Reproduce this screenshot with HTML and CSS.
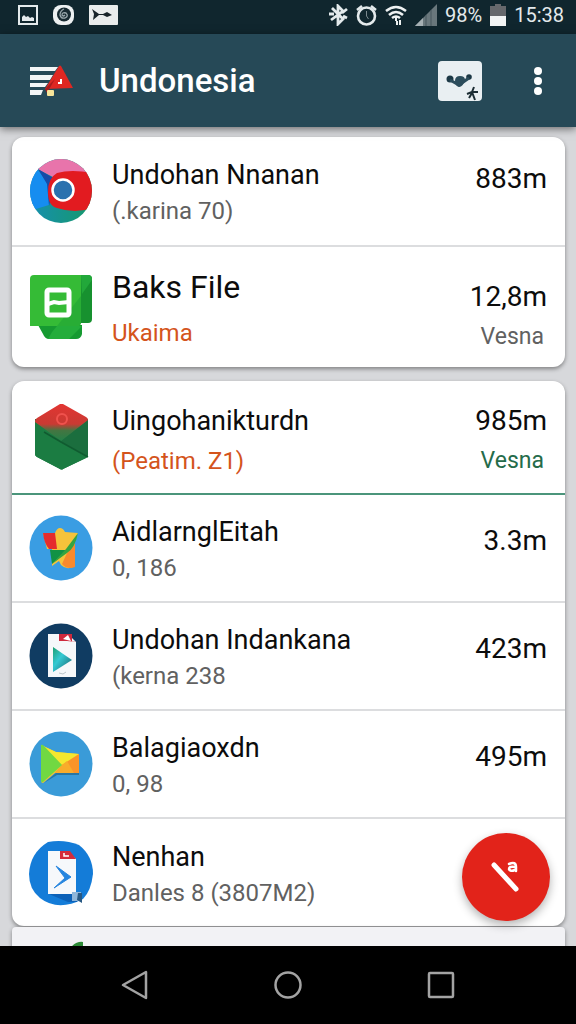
FILE: index.html
```
<!DOCTYPE html>
<html lang="id">
<head>
    <meta charset="UTF-8">
    <meta name="viewport" content="width=device-width, initial-scale=1.0">
    <title>Undonesia</title>
    <link rel="stylesheet" href="styles.css">
</head>
<body>
    <div class="status-bar">
        <div class="status-left">
            <svg width="20" height="20" viewBox="0 0 20 20"><rect x="1" y="1" width="18" height="18" fill="none" stroke="#e4eaec" stroke-width="2"/><path d="M4 16V12l2-2 2 2 2-1 2 2 2-1 2 1v3z" fill="#e4eaec"/></svg>
            <svg width="21" height="20" viewBox="0 0 21 20"><rect width="21" height="20" rx="8" fill="#eef1f2"/><circle cx="11" cy="9.500" r="7" fill="#182a31"/><path d="M11 4q-4 2-4 6 1 4 5 3 4-2 1-5-4-1-4 2 1 2 3 0" fill="none" stroke="#9aa8ad" stroke-width="1.300"/></svg>
            <svg width="29" height="20" viewBox="0 0 29 20"><rect width="29" height="20" rx="1" fill="#e9ecec"/><path d="M3 4l7 5h4l4-2 5 3-5 2-4-2h-4l-6 5 1-6z" fill="#172329"/></svg>
        </div>
        <div class="status-right">
            <svg width="20" height="22" viewBox="0 0 20 22" fill="none" stroke="#e4eaec" stroke-width="2.800"><path d="M4 4l11 11-5 5V2l5 5L3 16M1 10h5M14 9l5-4M15 12l4 2"/></svg>
            <svg width="21" height="22" viewBox="0 0 21 22" fill="none" stroke="#e4eaec"><circle cx="10.500" cy="12" r="8.500" stroke-width="2.600"/><path d="M1 6l5-4M20 6l-5-4" stroke-width="2.500"/><path d="M10.500 7v5l2 3" stroke-width="1" opacity=".5"/></svg>
            <svg width="22" height="22" viewBox="0 0 22 22" fill="none" stroke="#eef1f2" stroke-width="2.500"><path d="M1 7q10-8 20 0M4 11q7-6 14 0M7 14q4-3 8 0"/><path d="M11 13v4M12 17v4M15 16v5" stroke-width="2"/></svg>
            <svg width="22" height="22" viewBox="0 0 22 22"><path d="M0 22L22 0v22z" fill="#69777c"/><path d="M0 22l8-8v8z" fill="#a6b0b4"/><path d="M11 11v11M16 6v16" stroke="#46565c"/></svg>
            <span class="battery-text">98%</span>
            <svg width="16" height="22" viewBox="0 0 16 22"><path d="M5 0h6v2h5v10H0V2h5z" fill="#66686c"/><path d="M0 12h16v10H0z" fill="#f2f4f4"/></svg>
            <span class="clock">15:38</span>
        </div>
    </div>

    <header class="app-bar">
        <button class="icon-button" type="button" aria-label="Menu">
            <svg width="44" height="32" viewBox="0 0 44 32">
                <path d="M1 2h28l-3 4H1zM1 10h23l-3 5H1zM1 18h18l-3 4H1zM1 25h13l-2 5H1z" fill="#f3f6f7"/>
                <path d="M30 1q1-1 2 0l12 22-28 1z" fill="#df2722"/>
                <path d="M16 24l10-10-8 14z" fill="#a81c1d"/>
                <path d="M32 14v4h-3" fill="none" stroke="#fff" stroke-width="2"/>
                <rect x="18" y="25" width="7" height="6" rx="1" fill="#f7e59a"/>
            </svg>
        </button>
        <h1>Undonesia</h1>
        <button class="icon-button" type="button" aria-label="Akun">
            <svg width="44" height="40" viewBox="0 0 44 40">
                <rect width="44" height="40" rx="4" fill="#e9eff2"/>
                <circle cx="12" cy="18" r="3.500" fill="#1c3845"/><circle cx="31" cy="16" r="2.800" fill="#1c3845"/>
                <path d="M12 19l9 5 10-7" fill="none" stroke="#2c4d5c" stroke-width="3"/>
                <path d="M17 20q0-5 5-5 5 0 5 4-2 7-6 7-4-1-4-6z" fill="#2c4d5c"/>
                <path d="M36 26l-2 5-5 2M34 31l6 0M34 31l3 8M34 32l-3 5" fill="none" stroke="#1c2d34" stroke-width="2"/>
            </svg>
        </button>
        <button class="icon-button more" type="button" aria-label="Opsi lainnya">
            <svg width="8" height="28" viewBox="0 0 8 28" fill="#fff"><circle cx="4" cy="4" r="4"/><circle cx="4" cy="14" r="4"/><circle cx="4" cy="24" r="4"/></svg>
        </button>
    </header>

    <main>
        <div class="scroll">
            <ul class="card">
                <li class="row first">
                    <svg class="app-icon" viewBox="0 0 64 66">
                        <defs>
                            <clipPath id="round"><ellipse cx="32" cy="33" rx="31" ry="32"/></clipPath>
                            <linearGradient id="teal" x1="0" x2="1"><stop offset="0" stop-color="#168fb0"/><stop offset="1" stop-color="#16996a"/></linearGradient>
                        </defs>
                        <g clip-path="url(#round)">
                            <path d="M0 0h64v66H0z" fill="url(#teal)"/>
                            <path d="M0 0h64v16L26 20 10 12z" fill="#e874ab"/>
                            <path d="M0 0l9 12 12 16-1 19-20 6z" fill="#168df0"/>
                            <path d="M9 11l17 10-6 27-2-22z" fill="#174ba8"/>
                            <path d="M28 15q14-4 36 0v35q-18 6-36 0-9-2-9-16 0-14 9-19z" fill="#e21b20"/>
                        </g>
                        <circle cx="34" cy="32" r="10.500" fill="#2a71ae" stroke="#fff" stroke-width="2.500"/>
                    </svg>
                    <div class="info"><h2>Undohan Nnanan</h2><p>(.karina 70)</p></div>
                    <div class="size"><span>883m</span></div>
                </li>
                <li class="row featured">
                    <svg class="app-icon" viewBox="0 0 64 66">
                        <path d="M50 1h9q4 0 4 4v40q0 4-4 4h-9z" fill="#17912f"/>
                        <path d="M53 20l10-14V5q0-4-4-4h-7z" fill="#22a83a"/>
                        <path d="M9 51h44v9q-1 5-6 5H20q-4 0-6-5z" fill="#169a31"/>
                        <path d="M28 52h25L40 65H19q4-8 9-13z" fill="#24ad3b"/>
                        <path d="M5 1h47v47q0 4-4 4H1V5q0-4 4-4z" fill="#35bb36"/>
                        <path d="M52 22v26q0 4-4 4H28z" fill="#28ad35"/>
                        <rect x="18" y="16" width="22" height="25" rx="2" fill="none" stroke="#fff" stroke-width="5"/>
                        <path d="M19 30l6-2 5 1 10-1" fill="none" stroke="#fff" stroke-width="4"/>
                    </svg>
                    <div class="info"><h2>Baks File</h2><p class="warn">Ukaima</p></div>
                    <div class="size"><span>12,8m</span><small>Vesna</small></div>
                </li>
            </ul>

            <ul class="card">
                <li class="row update">
                    <svg class="app-icon" viewBox="0 0 64 66">
                        <defs><linearGradient id="fold" x1="0" y1="0" x2="0" y2="1"><stop offset="0" stop-color="#e33532"/><stop offset=".55" stop-color="#c93a33"/><stop offset=".72" stop-color="#447541"/><stop offset="1" stop-color="#238048"/></linearGradient></defs>
                        <path d="M6 15h53v36q0 2-2 3L34 65q-1 1-3 0L8 53q-2-1-2-3z" fill="#187a40"/>
                        <path d="M6 15l25 22 28 15-2 2-23 11q-1 1-3 0L8 53q-2-1-2-3z" fill="#1b7c42"/>
                        <path d="M31 37l28-21v36z" fill="#1b6e3e"/>
                        <path d="M31 0q2-1 3 0l23 13q2 1 2 3L32 37 6 18q0-3 2-4z" fill="url(#fold)"/>
                        <path d="M15 28l17 10 27 15" fill="none" stroke="#105b30" stroke-width="1.500"/>
                        <circle cx="33" cy="15" r="5" fill="none" stroke="#f0524d" stroke-width="2"/>
                    </svg>
                    <div class="info"><h2>Uingohanikturdn</h2><p class="warn">(Peatim. Z1)</p></div>
                    <div class="size"><span>985m</span><small class="new">Vesna</small></div>
                </li>
                <li class="row">
                    <svg class="app-icon" viewBox="0 0 64 66">
                        <ellipse cx="32" cy="33" rx="31.500" ry="32.500" fill="#3a9de3"/>
                        <path d="M14 18h12q2-5 5-5t5 4l13 1-5 12v22q-7 3-12-2l-2-4-7 5V34h-5z" fill="#f5c33b"/>
                        <path d="M14 18h12l2 16h-8q-5-6-6-16z" fill="#e52c2d"/>
                        <path d="M38 38l8-10v24q-8 3-13-3z" fill="#f98a2d"/>
                        <path d="M21 35h17L23 49z" fill="#129245"/>
                        <path d="M23 49l14-15 12-16q-3 15-11 20z" fill="#34a441"/>
                    </svg>
                    <div class="info"><h2>AidlarnglEitah</h2><p>0, 186</p></div>
                    <div class="size"><span>3.3m</span></div>
                </li>
                <li class="row">
                    <svg class="app-icon" viewBox="0 0 64 66">
                        <defs><linearGradient id="play" x1="0" x2="1" y2="1"><stop offset="0" stop-color="#1a9f70"/><stop offset=".4" stop-color="#35c9d3"/><stop offset="1" stop-color="#16606a"/></linearGradient></defs>
                        <ellipse cx="32" cy="33" rx="31.500" ry="32.500" fill="#103c62"/>
                        <path d="M19 11h20l8 8v35H19z" fill="#f6f8fa"/>
                        <path d="M30 11h13v8h5L38 18h-8z" fill="#ce293d"/>
                        <path d="M34 16l5-4 3 6z" fill="#fff"/>
                        <path d="M24 24l19 13-19 12z" fill="url(#play)"/>
                        <path d="M30 50l4 1 3-2" fill="none" stroke="#bcc5ca"/>
                    </svg>
                    <div class="info"><h2>Undohan Indankana</h2><p>(kerna 238</p></div>
                    <div class="size"><span>423m</span></div>
                </li>
                <li class="row">
                    <svg class="app-icon" viewBox="0 0 64 66">
                        <ellipse cx="32" cy="33" rx="31.500" ry="32.500" fill="#3a9bd8"/>
                        <path d="M15 52l12-10h23v2H28z" fill="#2876a2"/>
                        <path d="M12 14l15 7 23 2v19H26L14 52q-2 0-2-3z" fill="#f6c32f"/>
                        <path d="M12 14l15 7 23 2-17 11z" fill="#f5e72f"/>
                        <path d="M33 34l17-11v19H26z" fill="#fa9428"/>
                        <path d="M33 34l5-4 7 12H26z" fill="#f8ac2b"/>
                        <path d="M12 15q0-2 2-1l19 20-19 17q-2 1-2-2z" fill="#71d842"/>
                    </svg>
                    <div class="info"><h2>Balagiaoxdn</h2><p>0, 98</p></div>
                    <div class="size"><span>495m</span></div>
                </li>
                <li class="row">
                    <svg class="app-icon" viewBox="0 0 64 66">
                        <path d="M19 2q16-3 31 3 14 11 14 29-2 17-10 25-25 13-43-1Q0 49 0 34 1 13 19 2z" fill="#147cd8"/>
                        <path d="M20 54l28-2v10h-9z" fill="#0c61b8"/>
                        <path d="M19 11h20l8 8v35H19z" fill="#f6f8fb"/>
                        <path d="M31 11h10l6 8H31z" fill="#d42c3b"/>
                        <path d="M35 13v3h5" fill="none" stroke="#fff" stroke-width="1.500"/>
                        <path d="M27 26l15 11-17 11 11-10z" fill="#2685df" stroke="#2685df"/>
                        <path d="M43 52h9v9h-9z" fill="#8fb6da"/><path d="M49 53h4v10l-5-3z" fill="#285984"/>
                    </svg>
                    <div class="info"><h2>Nenhan</h2><p>Danles 8 (3807M2)</p></div>
                </li>
            </ul>

            <ul class="card next">
                <li class="row">
                    <svg class="app-icon" viewBox="0 0 64 66"><path d="M42 10q6-6 12-5v30H30z" fill="#2d8a35"/></svg>
                </li>
            </ul>
        </div>
        <button class="fab" type="button" aria-label="Edit">
            <svg width="32" height="32" viewBox="0 0 32 32" fill="none" stroke="#fff" stroke-linecap="round">
                <path d="M4 4l22 24" stroke-width="5"/>
                <path d="M19 3q7-3 7 3v4M25 6q-6-1-6 2 1 3 6 1" stroke-width="2.500"/>
            </svg>
        </button>
    </main>

    <nav class="nav-bar">
        <button type="button" aria-label="Kembali"><svg width="30" height="30" viewBox="0 0 30 30"><path d="M26 2v26L3 15z"/></svg></button>
        <button type="button" aria-label="Beranda"><svg width="30" height="30" viewBox="0 0 30 30"><circle cx="15" cy="15" r="12.500"/></svg></button>
        <button type="button" aria-label="Terbaru"><svg width="30" height="30" viewBox="0 0 30 30"><rect x="3" y="3" width="24" height="24" rx="1"/></svg></button>
    </nav>
</body>
</html>
```
FILE: styles.css
```
* {
    box-sizing: border-box;
}
body {
    font-family: Roboto, sans-serif;
    background-color: #d7d8db;
    margin: 0;
    height: 100vh;
    display: flex;
    flex-direction: column;
    overflow: hidden;
}
h1, h2, p, ul {
    margin: 0;
    padding: 0;
    font-weight: 400;
}
button {
    border: none;
    background: none;
    padding: 0;
    cursor: pointer;
}
svg {
    display: block;
    flex-shrink: 0;
}
.status-bar {
    height: 34px;
    padding: 0 12px 4px 18px;
    background-color: #10262e;
    color: #e4eaec;
    display: flex;
    justify-content: space-between;
    align-items: center;
    font-size: 20px;
    flex-shrink: 0;
}
.status-left {
    display: flex;
    align-items: center;
    gap: 15px;
}
.status-right {
    display: flex;
    align-items: center;
    gap: 8px;
}
.app-bar {
    height: 93px;
    padding: 0 34px 0 29px;
    background-color: #264957;
    color: white;
    display: flex;
    align-items: center;
    flex-shrink: 0;
    box-shadow: 0 2px 8px rgba(0, 0, 0, 0.5);
    z-index: 1;
}
.app-bar h1 {
    flex: 1;
    margin-left: 26px;
    font-size: 33px;
    font-weight: 500;
}
.more {
    margin-left: 52px;
}
main {
    flex: 1;
    min-height: 0;
    position: relative;
}
.scroll {
    height: 100%;
    padding: 10px 11px 0 12px;
    overflow-y: auto;
    scrollbar-width: none;
}
.card {
    list-style: none;
    background: white;
    border-radius: 12px;
    margin-bottom: 14px;
    box-shadow: 0 2px 4px rgba(0, 0, 0, 0.4);
}
.row {
    height: 108px;
    padding: 0 18px 0 17px;
    display: flex;
    align-items: center;
    gap: 19px;
    border-bottom: 2px solid #dcdddf;
}
.row:last-child {
    height: 107px;
    border-bottom: none;
}
.app-icon {
    width: 64px;
    height: 66px;
}
.info {
    flex: 1;
    padding-top: 4px;
    white-space: nowrap;
}
.info h2 {
    font-size: 27px;
    line-height: 36px;
    color: #0c0c0c;
}
.info p {
    font-size: 24px;
    line-height: 36px;
    color: #616161;
}
.size {
    text-align: right;
    padding-bottom: 14px;
}
.size span, .size small {
    display: block;
    font-size: 28px;
    line-height: 40px;
    color: #0c0c0c;
}
.size small {
    font-size: 23px;
    color: #616161;
    padding-right: 3px;
}
.first {
    height: 110px;
}
.first .size {
    padding-bottom: 24px;
}
.row.featured {
    height: 120px;
}
.featured h2 {
    font-size: 32px;
    line-height: 48px;
}
.featured p {
    line-height: 44px;
}
.featured .size {
    padding: 20px 0 0;
}
.update {
    height: 114px;
    border-bottom-color: #4b957b;
}
.update h2, .update p {
    line-height: 40px;
}
.update .info, .update .size {
    padding: 8px 0 0;
}
.info .warn {
    color: #d4541c;
}
.size .new {
    color: #256b4a;
}
.next {
    margin-top: -13px;
    background: #f2f2f5;
    border-radius: 4px;
}
.next .row {
    align-items: flex-start;
    padding-top: 10px;
}
.fab {
    position: absolute;
    right: 26px;
    bottom: 25px;
    width: 88px;
    height: 88px;
    border-radius: 50%;
    background-color: #e2231a;
    display: flex;
    justify-content: center;
    align-items: center;
    box-shadow: 0 4px 10px rgba(0, 0, 0, 0.3);
}
.nav-bar {
    height: 78px;
    padding: 0 58px;
    background-color: black;
    display: grid;
    grid-template-columns: 1fr 1fr 1fr;
    flex-shrink: 0;
    z-index: 1;
}
.nav-bar button {
    display: flex;
    justify-content: center;
    align-items: center;
}
.nav-bar svg {
    fill: none;
    stroke: #a3a3a3;
    stroke-width: 2.5;
    stroke-linejoin: round;
}
```
